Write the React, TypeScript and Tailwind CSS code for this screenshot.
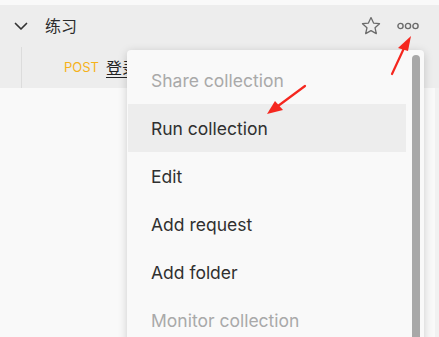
import React from "react";

export default function App() {
  const items = [
    { label: "Share collection", disabled: true },
    { label: "Run collection", active: true },
    { label: "Edit" },
    { label: "Add request" },
    { label: "Add folder" },
    { label: "Monitor collection", disabled: true },
  ];
  return (
    <div
      className="relative w-[439px] h-[337px] overflow-hidden bg-[#f9f9f9]"
      style={{ fontFamily: "Inter, 'Noto Sans CJK SC', sans-serif" }}
    >
      <div className="h-[5px]" />
      <div className="bg-[#ededed]">
        <div className="h-[42px] flex items-center pl-[12px] pr-[20px]">
          <svg width="18" height="18" viewBox="0 0 18 18" fill="none" stroke="#333" strokeWidth="1.7" strokeLinecap="round" strokeLinejoin="round">
            <path d="M3.5 6.5l5.5 5.5 5.5-5.5" />
          </svg>
          <span className="ml-[15px] text-[16px] text-[#2b2b2b]">练习</span>
          <div className="flex-1" />
          <svg width="22" height="22" viewBox="0 0 24 24" fill="none" stroke="#6b6b6b" strokeWidth="1.4" strokeLinejoin="round">
            <path d="M12 2.8l2.8 6 6.5.7-4.9 4.4 1.4 6.4L12 17l-5.8 3.3 1.4-6.4-4.9-4.4 6.5-.7z" />
          </svg>
          <svg className="ml-[15px]" width="22" height="8" viewBox="0 0 22 8" fill="none" stroke="#6b6b6b" strokeWidth="1.4">
            <circle cx="3.5" cy="4" r="2.6" />
            <circle cx="11" cy="4" r="2.6" />
            <circle cx="18.5" cy="4" r="2.6" />
          </svg>
        </div>
        <div className="h-[41px] flex items-center">
          <div className="ml-[21px] w-px h-full bg-[#dcdcdc]" />
          <span className="ml-[42px] text-[13px] text-[#f5b21b]">POST</span>
          <span className="ml-[7px] text-[16px] text-[#222] underline underline-offset-[3px]">登录</span>
        </div>
      </div>

      {/* right side panel hint */}
      <div className="absolute right-0 top-[88px] w-[4px] bottom-0 bg-[#f1f1f1]" />

      {/* Menu */}
      <div className="absolute left-[127px] top-[50px] w-[297px] h-[300px] bg-[#f9f9f9] rounded-[4px] shadow-[0_2px_10px_rgba(0,0,0,0.18)] flex">
        <div className="flex-1 pt-[6px] pl-[1px]">
          {items.map((it) => (
            <div
              key={it.label}
              className={
                "h-[48px] flex items-center pl-[23px] pt-[2px] text-[17.5px] " +
                (it.active ? "bg-[#ededed] " : "") +
                (it.disabled ? "text-[#a9a9a9]" : "text-[#303030]")
              }
            >
              {it.label}
            </div>
          ))}
        </div>
        <div className="w-[8px] ml-[6px] mr-[4px] mt-[5px] bg-[#a8a8a8] rounded-t-[4px]" />
      </div>

      {/* Red arrows */}
      <svg className="absolute left-0 top-0 pointer-events-none" width="439" height="337">
        <path d="M392 74 L405 46" stroke="#f5271f" strokeWidth="2.2" strokeLinecap="round" />
        <path d="M411 36 L398 48 L408 51 Z" fill="#f5271f" />
        <path d="M305 86 L278 106" stroke="#f5271f" strokeWidth="2.2" strokeLinecap="round" />
        <path d="M267 114 L275 101 L283 110 Z" fill="#f5271f" />
      </svg>
    </div>
  );
}
